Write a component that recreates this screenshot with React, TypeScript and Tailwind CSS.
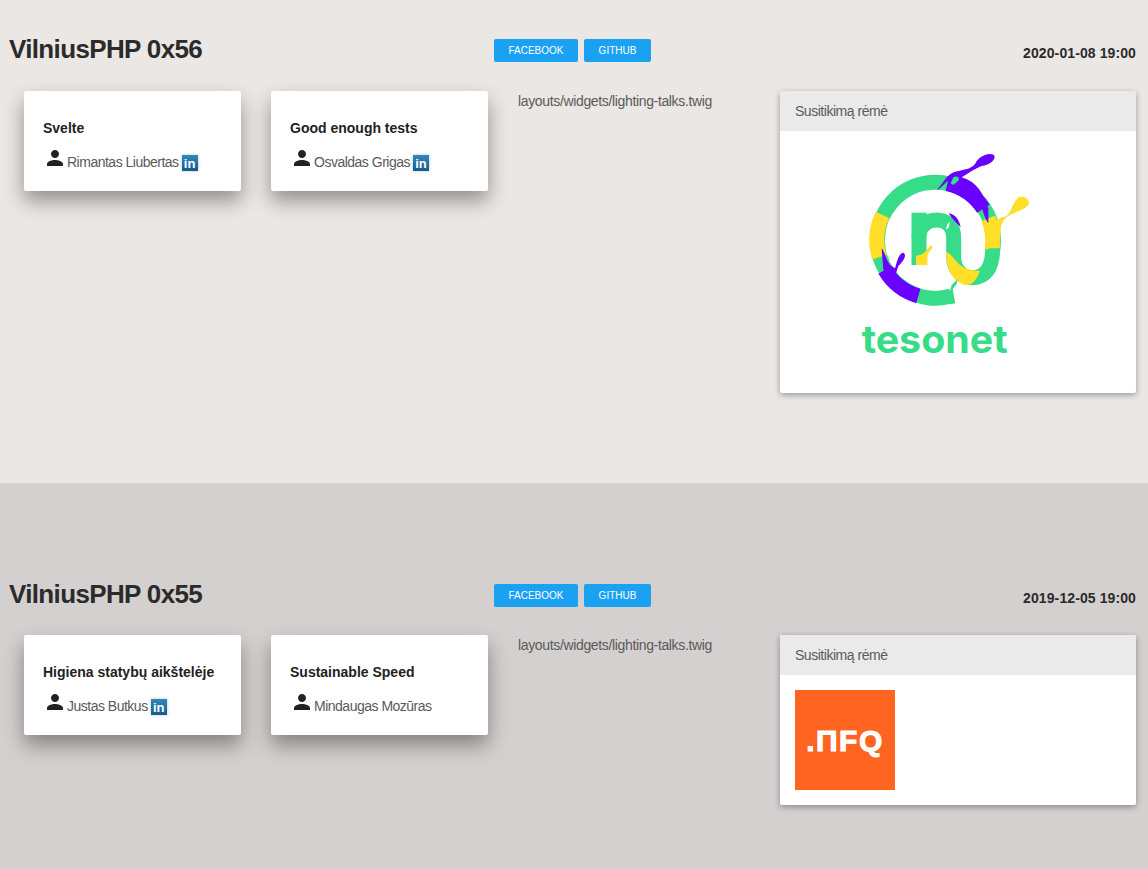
import type { ReactNode } from 'react';
import { MdPerson } from 'react-icons/md';

const font = "font-['Liberation_Sans',Arial,sans-serif]";

function Linkedin() {
  return (
    <span className="ml-[3px] mt-[9px] flex h-4 w-4 items-end justify-center bg-gradient-to-b from-[#3189bd] to-[#105d8f] text-[13px] leading-[15px] font-bold text-white shadow-[0_0_3px_rgba(0,0,0,0.25)]">
      in
    </span>
  );
}

function TalkCard({ title, speaker, linkedin }: { title: string; speaker: string; linkedin?: boolean }) {
  return (
    <div className="h-[100px] w-[217px] rounded-[2px] bg-white pl-[19px] pt-[27px] shadow-[0_10px_20px_rgba(0,0,0,0.38)]">
      <div className="text-[14px] leading-5 font-bold text-[#222]">{title}</div>
      <div className="mt-2 flex items-start">
        <MdPerson size={24} className="text-[#222]" />
        <span className="pt-[6px] text-[14px] leading-5 tracking-[-0.5px] text-[#5a5a5a]">{speaker}</span>
        {linkedin && <Linkedin />}
      </div>
    </div>
  );
}

function TesonetLogo() {
  return (
    <svg width="245" height="232" viewBox="-135 18 735 696" fill="none">
      {/* ring */}
      <path d="M334 468 A174 174 0 1 1 458 330" stroke="#37dc88" strokeWidth="45" />
      <path d="M127.5 225 A174 174 0 0 0 118 352" stroke="#ffdf27" strokeWidth="45" />
      <path d="M134.5 390 A174 174 0 0 0 235 468" stroke="#6a00ff" strokeWidth="45" />
      <path d="M322 131 A174 174 0 0 1 430 206" stroke="#6a00ff" strokeWidth="45" />
      <path d="M445 235 A174 174 0 0 1 456 330" stroke="#ffdf27" strokeWidth="45" />
      {/* n and u */}
      <path d="M237 375 V218" stroke="#37dc88" strokeWidth="45" />
      <path
        d="M237 290 C237 258 262 240 290 240 C320 240 341 258 341 292 V350 C341 390 368 413 398 413 C435 413 458 385 458 325"
        stroke="#37dc88"
        strokeWidth="45"
      />
      <path d="M318 336 C335 340 345 365 365 378 C380 390 400 392 420 392 C410 420 395 435 380 435 C345 432 318 395 318 336Z" fill="#ffdf27" />
      <path d="M228 375 V348 C240 345 250 342 255 335 L272 316 L278 322 L262 345 V375Z" fill="#ffdf27" />
      <path d="M326 220 C345 222 358 240 362 262 C350 250 335 235 326 220Z" fill="#6a00ff" />
      <path d="M322 252 L330 246 L326 262 L318 270Z" fill="#fff" />
      {/* splashes */}
      <path d="M290 150 C310 130 320 102 345 95 C375 88 392 88 405 72 C415 50 445 35 462 45 C470 58 450 75 425 78 C405 85 385 100 365 112 C410 125 430 160 445 205 V250 C435 235 425 210 425 185 C395 170 350 160 332 148 C325 135 345 125 330 120 C315 125 305 145 290 150Z" fill="#6a00ff" />
      <path d="M340 112 C350 105 360 112 355 122 L340 135 L332 130Z" fill="#37dc88" />
      <path d="M436 330 V285 C445 255 465 235 495 230 C515 220 515 190 535 172 C555 165 572 180 565 195 C550 212 525 215 505 228 C485 240 482 260 480 290 L478 310Z" fill="#ffdf27" />
      <path d="M125 325 C135 335 135 355 150 375 L165 385 C170 370 175 340 190 338 C202 345 190 365 175 378 L168 400 L130 390Z" fill="#6a00ff" />
      <path d="M325 470 L335 435 L352 418 L350 432 L338 448 L346 490 L330 493Z" fill="#37dc88" />
      <text x="65" y="640" fontFamily="Inter, sans-serif" fontWeight="700" fontSize="116" fill="#37dc88" textLength="438" lengthAdjust="spacingAndGlyphs">
        tesonet
      </text>
    </svg>
  );
}

function NfqLogo() {
  return (
    <div className="flex h-[100px] w-[100px] items-start justify-center bg-[#ff6520] pt-[36px]">
      <span className="text-[30px] leading-[30px] font-bold tracking-[1.5px] text-white [-webkit-text-stroke:1px_white]">.ПFQ</span>
    </div>
  );
}

function Meetup({
  title,
  date,
  talks,
  logo,
  className,
  cardsClass,
}: {
  title: string;
  date: string;
  talks: { title: string; speaker: string; linkedin?: boolean }[];
  logo: ReactNode;
  className: string;
  cardsClass: string;
}) {
  return (
    <section className={className}>
      <div className="flex h-[23px] items-center pl-[9px] pr-3">
        <h1 className="-mt-[3px] w-[485px] text-[26px] leading-[30px] font-bold tracking-[-0.65px] text-[#2b2b2b]">{title}</h1>
        <div className="flex gap-[6px]">
          <a className="flex h-[23px] w-[84px] items-center justify-center rounded-[2px] bg-[#1ba1f2] text-[10px] text-white">FACEBOOK</a>
          <a className="flex h-[23px] w-[67px] items-center justify-center rounded-[2px] bg-[#1ba1f2] text-[10px] text-white">GITHUB</a>
        </div>
        <div className="ml-auto mt-[5px] text-[14px] font-bold tracking-[0.1px] text-[#2b2b2b]">{date}</div>
      </div>
      <div className={`${cardsClass} flex items-start pl-6 pr-3`}>
        <div className="flex gap-[30px]">
          {talks.map((t) => (
            <TalkCard key={t.title} {...t} />
          ))}
        </div>
        <div className="ml-[30px] w-[262px] text-[14px] leading-5 tracking-[-0.35px] text-[#5a5a5a]">layouts/widgets/lighting-talks.twig</div>
        <div className="w-[356px] rounded-[2px] bg-white shadow-[0_2px_6px_rgba(0,0,0,0.35)]">
          <div className="h-10 bg-[#eaeaea] pl-[15px] text-[14px] leading-10 tracking-[-0.47px] text-[#5a5a5a]">Susitikimą rėmė</div>
          <div className="p-[15px]">{logo}</div>
        </div>
      </div>
    </section>
  );
}

export default function App() {
  return (
    <div className={`${font} h-[869px] overflow-hidden`}>
      <Meetup
        className="h-[483px] bg-[#ebe7e4] pt-[39px]"
        cardsClass="mt-[29px]"
        title="VilniusPHP 0x56"
        date="2020-01-08 19:00"
        talks={[
          { title: 'Svelte', speaker: 'Rimantas Liubertas', linkedin: true },
          { title: 'Good enough tests', speaker: 'Osvaldas Grigas', linkedin: true },
        ]}
        logo={<TesonetLogo />}
      />
      <Meetup
        className="h-[386px] bg-[#d4d0cf] pt-[101px]"
        cardsClass="mt-[28px]"
        title="VilniusPHP 0x55"
        date="2019-12-05 19:00"
        talks={[
          { title: 'Higiena statybų aikštelėje', speaker: 'Justas Butkus', linkedin: true },
          { title: 'Sustainable Speed', speaker: 'Mindaugas Mozūras' },
        ]}
        logo={<NfqLogo />}
      />
    </div>
  );
}
